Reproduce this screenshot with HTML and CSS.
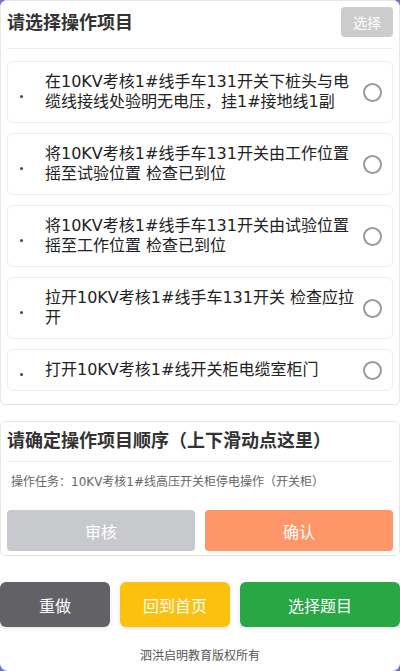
FILE: index.html
```html
<!DOCTYPE html>
<html lang="zh">
<head>
<meta charset="utf-8">
<link rel="stylesheet" href="styles.css">
</head>
<body>
<div class="page">
  <section class="panel select-panel">
    <div class="panel-head">
      <h2 class="panel-title">请选择操作项目</h2>
      <button class="btn-select">选择</button>
    </div>
    <ul class="items">
      <li class="item"><span class="dot"></span><span class="item-text">在10KV考核1#线手车131开关下桩头与电缆线接线处验明无电压，挂1#接地线1副</span><span class="radio"></span></li>
      <li class="item"><span class="dot"></span><span class="item-text">将10KV考核1#线手车131开关由工作位置摇至试验位置 检查已到位</span><span class="radio"></span></li>
      <li class="item"><span class="dot"></span><span class="item-text">将10KV考核1#线手车131开关由试验位置摇至工作位置 检查已到位</span><span class="radio"></span></li>
      <li class="item"><span class="dot"></span><span class="item-text">拉开10KV考核1#线手车131开关 检查应拉开</span><span class="radio"></span></li>
      <li class="item"><span class="dot"></span><span class="item-text">打开10KV考核1#线开关柜电缆室柜门</span><span class="radio"></span></li>
    </ul>
  </section>

  <section class="panel order-panel">
    <div class="panel-head order-head">
      <h2 class="panel-title">请确定操作项目顺序（上下滑动点这里）</h2>
    </div>
    <p class="task">操作任务：10KV考核1#线高压开关柜停电操作（开关柜）</p>
    <div class="order-actions">
      <button class="btn btn-review">审核</button>
      <button class="btn btn-confirm">确认</button>
    </div>
  </section>

  <div class="bottom-actions">
    <button class="bbtn bbtn-redo">重做</button>
    <button class="bbtn bbtn-home">回到首页</button>
    <button class="bbtn bbtn-pick">选择题目</button>
  </div>

  <footer class="footer">泗洪启明教育版权所有</footer>
</div>
</body>
</html>
```

FILE: styles.css
```css
* { box-sizing: border-box; }
html, body {
  margin: 0;
  padding: 0;
  background: #6f74c8;
}
body {
  font-family: "DejaVu Sans", "Noto Sans CJK SC", sans-serif;
  color: #333;
}
.page {
  width: 400px;
  height: 671px;
  background: #fff;
  border-radius: 8px;
  overflow: hidden;
  display: flex;
  flex-direction: column;
}
.panel {
  border: 1px solid #e6e6e6;
  border-radius: 5px;
  background: #fff;
}
.select-panel {
  padding: 0 6px 13px;
}
.panel-head {
  display: flex;
  align-items: flex-start;
  justify-content: space-between;
  height: 48px;
  border-bottom: 1px solid #ececec;
}
.panel-title {
  margin: 0;
  font-size: 18px;
  font-weight: bold;
  line-height: 24px;
  padding-top: 10px;
  color: #333;
}
.btn-select {
  margin-top: 6px;
  width: 52px;
  height: 30px;
  border: none;
  border-radius: 4px;
  background: #cccccc;
  color: #fff;
  font-family: inherit;
  font-size: 14px;
  padding: 0;
}
.items {
  list-style: none;
  margin: 12px 0 0;
  padding: 0;
  display: flex;
  flex-direction: column;
  gap: 10px;
}
.item {
  display: flex;
  align-items: center;
  border: 1px solid #ececec;
  border-radius: 6px;
  padding: 10px 10px 10px 12px;
}
.dot {
  width: 3px;
  height: 3px;
  background: #444;
  border-radius: 50%;
  flex: none;
  margin-right: 22px;
  margin-top: 8px;
}
.item-text {
  flex: 1;
  font-size: 16px;
  line-height: 20px;
  color: #222;
  margin-right: 7px;
}
.radio {
  flex: none;
  width: 19px;
  height: 19px;
  border: 2px solid #999;
  border-radius: 50%;
}
.order-panel {
  margin-top: 16px;
  padding: 0 6px 4px;
}
.order-head {
  height: 40px;
}
.order-head .panel-title {
  padding-top: 7px;
}
.task {
  margin: 0;
  padding: 11px 4px 0;
  font-size: 12px;
  line-height: 18px;
  color: #666;
}
.order-actions {
  display: flex;
  gap: 10px;
  margin-top: 19px;
}
.btn {
  flex: 1;
  height: 41px;
  border: none;
  border-radius: 4px;
  color: #fff;
  font-family: inherit;
  font-size: 16px;
}
.btn-review { background: #c8c9cc; }
.btn-confirm { background: #fd976a; }
.bottom-actions {
  display: flex;
  gap: 10px;
  margin-top: 26px;
}
.bbtn {
  height: 45px;
  border: none;
  border-radius: 6px;
  color: #fff;
  font-family: inherit;
  font-size: 16px;
  box-shadow: 0 1px 4px rgba(0,0,0,0.12);
}
.bbtn-redo { width: 110px; background: #626266; }
.bbtn-home { width: 110px; background: #fcc10f; }
.bbtn-pick { flex: 1; background: #28a745; }
.footer {
  text-align: center;
  font-size: 12px;
  color: #555;
  margin-top: 21px;
  line-height: 16px;
}
```
